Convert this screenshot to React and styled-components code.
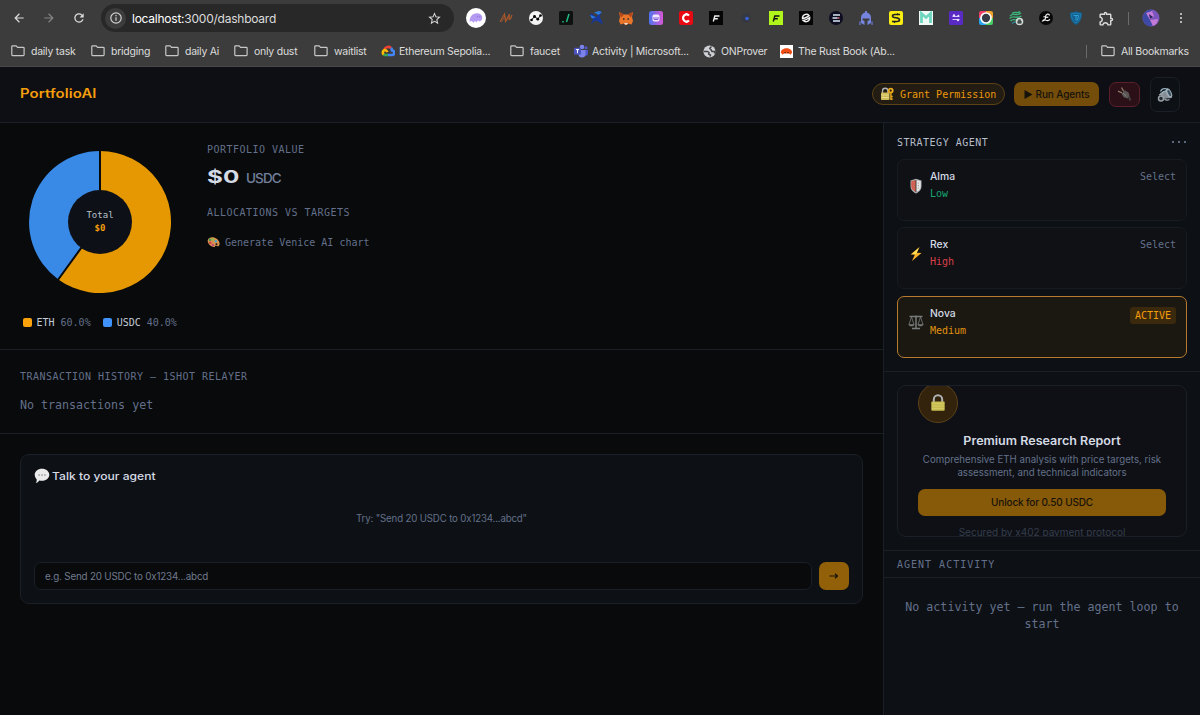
import styled, { createGlobalStyle } from "styled-components";
import { MdArrowBack, MdArrowForward, MdRefresh, MdStarBorder, MdOutlineExtension } from "react-icons/md";

const COLORS = {
  bg: "#080a0c",
  panel: "#0d1015",
  header: "#0d0f14",
  line: "#1b1f27",
  amber: "#f59e0b",
  dim: "#64708a",
  text: "#d5dbe5",
};

const extensions = [
  <g key="a">
    <circle cx="15" cy="15" r="10" fill="#fff" />
    <path d="M8.500 18.500c.5-5.500 3-8 7-8.300 3.500-.2 5.500 1.600 5.800 4 .2 2-1 4-3 4.300l-1.300-1.200-1.200 2-1.800-1.200-1.600 1.700-1.400-1.700z" fill="#b49af2" />
    <path d="M16.500 12.800v1.600M18.800 12.800v1.600" stroke="#8f72dc" />
  </g>,
  <g key="b" fill="none" stroke="#a8572d" strokeWidth="1.100">
    <path d="M9 19l4.500-8 1 7.500 4-7.500-.5 5.500q2-.5 3-4.500" />
    <path d="M10.500 19l3.500-6 .5 6 3.500-6" strokeWidth=".7" />
  </g>,
  <g key="c">
    <circle cx="15" cy="15" r="7" fill="#f4f4f4" />
    <path d="M10.500 17l3-3.500 3.300 2.500 2.700-3.500" stroke="#111" strokeWidth="1" fill="none" />
    <circle cx="10.500" cy="17" r="1.300" />
    <circle cx="13.500" cy="13.500" r="1.400" />
    <circle cx="16.800" cy="16.200" r="1.400" />
    <circle cx="19.500" cy="12.500" r="1.300" />
  </g>,
  <g key="d">
    <rect x="8" y="8" width="14" height="14" rx="1.500" fill="#0d1110" />
    <path d="M18 11l-2.500 8M12 18v1.500" stroke="#22b980" strokeWidth="1.500" />
  </g>,
  <g key="e">
    <path d="M8.500 11c4-1 5 3 7 3l4.500-6-1 6 3 7c-4-1-5-3-7.500-3.500L10 21l2-4.500z" fill="#17399c" />
    <path d="M13 9.500l5-1.500 3 1-3.500 3zM9 12l6 2-4 1.500z" fill="#2b7be0" />
  </g>,
  <g key="f">
    <path d="M8 9l5 2.500h4L22 9l-1 5 1 4-1.500 3.500-3.500-1-1 1.500h-2l-1-1.500-3.500 1L8 18l1-4z" fill="#e8752a" />
    <path d="M8 9l5 2.500-3 3zM22 9l-5 2.500 3 3z" fill="#b4441a" />
    <path d="M12 16h1.500M16.500 16H18" stroke="#2a2a2a" strokeWidth="1.300" />
    <path d="M13 20h4l-1 1.500h-2z" fill="#e9dccf" />
  </g>,
  <g key="g">
    <defs>
      <linearGradient id="violetMix" x1="0" y1="0" x2="1" y2="0">
        <stop offset="0" stopColor="#4c74ee" />
        <stop offset="1" stopColor="#d957d8" />
      </linearGradient>
    </defs>
    <rect x="8" y="8" width="14" height="14" rx="2.500" fill="url(#violetMix)" />
    <rect x="11.500" y="11.500" width="7" height="7" rx="1.800" fill="#eee7ff" />
    <path d="M13 14v2.500h4V14M15 14v2.500" stroke="#7a4bc8" strokeWidth=".9" fill="none" />
  </g>,
  <g key="h">
    <rect x="8" y="8" width="14" height="14" rx="2" fill="#e80a12" />
    <path d="M18 12.500a3.500 3.500 0 100 5M15.500 10v2M15.500 18v2" fill="none" stroke="#fff" strokeWidth="2.200" />
  </g>,
  <g key="i">
    <rect x="8" y="8" width="14" height="14" fill="#050505" />
    <path d="M12.300 18.500l1.500-5.500h4.700M13.200 15.800h3.600" fill="none" stroke="#eee" strokeWidth="1.400" />
  </g>,
  <g key="j">
    <circle cx="15" cy="15" r="4.500" fill="#343842" />
    <circle cx="16" cy="15.500" r="1.800" fill="#3c60dc" />
  </g>,
  <g key="k">
    <rect x="8" y="8" width="14" height="14" fill="#b0f51c" />
    <path d="M12.300 18.500l1.500-5.500h4.700M13.200 15.800h3.600" fill="none" stroke="#111" strokeWidth="1.400" />
  </g>,
  <g key="l">
    <rect x="8" y="8" width="14" height="14" fill="#050505" />
    <path d="M11.500 15.500a3.800 3.800 0 016.500-3q-1.500 2-6.500 3zM18.700 14.500a3.800 3.800 0 01-6.500 3q3-.5 6.500-3z" fill="none" stroke="#eee" strokeWidth="1.400" />
  </g>,
  <g key="m">
    <circle cx="15" cy="15" r="7" fill="#0c0d20" />
    <path d="M12 12h7M11.500 15h5M12 18h7" stroke="#d9e6ef" strokeWidth="1.500" />
    <path d="M16.500 15h2" stroke="#e26c6c" strokeWidth="1.500" />
  </g>,
  <g key="n">
    <path d="M10 20v-5.500a5 5 0 0110 0V20l-3.500 2v-4l2-1v-1.500h-7V17l2 1v4z" fill="#7584dc" />
    <path d="M15 8v3" stroke="#7584dc" strokeWidth="1.800" />
    <path d="M9 18.500v3.500M21 18.500v3.500" stroke="#6675cc" strokeWidth="1.300" />
  </g>,
  <g key="o">
    <rect x="8" y="8" width="14" height="14" rx="2" fill="#f8ec12" />
    <path d="M19 11.500h-5q-2.500 0-2.500 1.500t3.500 1.800q3.500.3 3.500 2t-2.500 1.700h-5M17 10.500l-1.500 1.500M14.500 18l-1.500 1.800" fill="none" stroke="#222" strokeWidth="1.600" />
  </g>,
  <g key="p">
    <rect x="8" y="8" width="14" height="14" fill="#effaf6" />
    <path d="M10.500 20v-9.500l4.500 4 4.500-4V20" fill="none" stroke="#6ed5bf" strokeWidth="2.800" />
  </g>,
  <g key="q">
    <rect x="8" y="8" width="14" height="14" rx="1.500" fill="#5a2bc4" />
    <path d="M11.500 13.500h7M18.500 16.500h-7" fill="none" stroke="#d8c9ff" strokeWidth="1" />
    <circle cx="13" cy="12.500" r="1.200" fill="#e8ddff" />
    <circle cx="17.300" cy="12.800" r="1" fill="#e8ddff" />
    <circle cx="17" cy="17" r="1.200" fill="#e8ddff" />
  </g>,
  <g key="r">
    <path d="M10 8h5v7H8v-5a2 2 0 012-2z" fill="#ee3f65" />
    <path d="M15 8h5a2 2 0 012 2v5h-7z" fill="#f3a12a" />
    <path d="M8 15h7v7h-5a2 2 0 01-2-2z" fill="#25a5ec" />
    <path d="M15 15h7v5a2 2 0 01-2 2h-5z" fill="#47cf64" />
    <circle cx="15" cy="15" r="5" fill="#363b46" stroke="#fff" strokeWidth="1.700" />
  </g>,
  <g key="s">
    <g fill="none" stroke="#39b77a" strokeWidth="1.300">
      <path d="M9 13c4-4 7 1 11-3M8.500 15.500c4-4 7 1 12-2.500M9.500 18c3-3 5 0 7.500-1.500M11 10.500c3-2.500 6 .5 8-2" />
      <path d="M11 20.500q2-2 4-1" stroke="#2a8a9a" />
    </g>
    <circle cx="18.500" cy="18.500" r="3.800" fill="#d5dbd8" />
    <path d="M16.800 18h3.400v2.300h-3.400zM17.500 18v-1.200h2V18" fill="#45504b" stroke="#45504b" strokeWidth=".7" />
  </g>,
  <g key="t">
    <circle cx="15" cy="15" r="7" fill="#070707" />
    <path d="M18.500 12.500q-.5-1.800-2.300-1.300-1.700.6-1.500 2.300l-2.200.3M14.700 13.500q-.2 4-3 4.500 1-2 3.300-.8 2.300 1 4-.9M14.800 14.500l2.500-.3" fill="none" stroke="#f3f3f3" strokeWidth="1.200" />
  </g>,
  <g key="u">
    <path d="M9 9.500c4 0 4-1 6-1s2 1 6 1c0 6-1.500 10-6 12.500-4.500-2.500-6-6.500-6-12.500z" fill="#14608f" />
    <path d="M10.500 11q4.500-1.500 9 0c0 4-1 7-4.500 9-3.500-2-4.500-5-4.500-9z" fill="none" stroke="#2484b8" strokeWidth=".8" />
    <path d="M12.500 12.500h5M15 12.500v5M17.500 12.500q0 3-1.500 5" fill="none" stroke="#2da0d6" strokeWidth="1" />
  </g>,
];

const allocations = [
  { name: "ETH", share: "60.0%", color: "#f9a20b" },
  { name: "USDC", share: "40.0%", color: "#3f93fa" },
];

const ShieldIcon = () => (
  <svg width="14" height="16" viewBox="0 0 14 16">
    <path d="M1.500 2.500L7 .8l5.500 1.700v5.500c0 4-2.500 6-5.500 7.500-3-1.500-5.500-3.500-5.500-7.500z" fill="#a5a9ac" />
    <path d="M2.300 3.300L7 2v12c-3-1.500-4.700-3-4.700-6z" fill="#d95b4b" />
    <path d="M7 2l4.700 1.300V8c0 3-1.700 4.700-4.700 6z" fill="#e6e7e7" />
    <path d="M7 2v12" stroke="#444" />
    <path d="M4.800 4.500v6M9.300 4.500v6" stroke="#9a8b86" strokeDasharray="1 1.500" />
  </svg>
);

const BoltIcon = () => (
  <svg width="14" height="16" viewBox="0 0 14 16">
    <path d="M10.500 1L1.500 8.500l4.300.2L3 15l9.500-8-4.600-.3z" fill="#fbb32a" />
    <path d="M10 1.500L3 8l4 .1z" fill="#ffe15a" />
  </svg>
);

const ScalesIcon = () => (
  <svg width="16" height="16" viewBox="0 0 16 16" fill="none" stroke="#777b7c">
    <path d="M8 1.500V14M1.500 2.500h13M4 14.500h8" strokeWidth="1.500" />
    <path d="M3.500 3L1 10.500M3.500 3L6 10.500M12.500 3L10 10.500M12.500 3L15 10.500" strokeWidth=".8" />
    <path d="M.8 10.500h5.400a2.700 1.500 0 01-5.400 0zM9.800 10.500h5.400a2.700 1.500 0 01-5.400 0z" fill="#777b7c" strokeWidth=".6" />
  </svg>
);

const agents = [
  { name: "Alma", risk: "Low", color: "#17a672", icon: <ShieldIcon /> },
  { name: "Rex", risk: "High", color: "#dc4048", icon: <BoltIcon /> },
  { name: "Nova", risk: "Medium", color: "#e0920f", icon: <ScalesIcon />, active: true },
];

const GoogleCloudIcon = () => (
  <svg width="14" height="12" viewBox="0 0 14 12" fill="none" strokeWidth="2.600">
    <path d="M3.500 4.500A4 4 0 0110 3" stroke="#ea4335" />
    <path d="M10 3a3.500 3.500 0 011 2.500 2.200 2.200 0 010 4.500H7" stroke="#4285f4" />
    <path d="M7 10H4a2.500 2.500 0 01-1.300-.5" stroke="#34a853" />
    <path d="M2.700 9.500A2.700 2.700 0 013.500 5Q5.500 5 6.500 7" stroke="#fbbc05" />
  </svg>
);

const TeamsIcon = () => (
  <svg width="14" height="14" viewBox="0 0 14 14">
    <circle cx="8" cy="3" r="2.300" fill="#7b83eb" />
    <circle cx="12" cy="3.800" r="1.500" fill="#5059c9" />
    <path d="M10.500 6H14v3.500a2.300 2.300 0 01-3.500 2z" fill="#5059c9" />
    <path d="M4.500 6h7v4a3.500 3.500 0 01-7 0z" fill="#7b83eb" />
    <rect x="0" y="3.800" width="7" height="7" rx=".8" fill="#4b53bc" />
    <path d="M2 5.600h3M3.500 5.600v3.600" stroke="#fff" />
  </svg>
);

const GlobeIcon = () => (
  <svg width="13" height="13" viewBox="0 0 13 13">
    <circle cx="6.500" cy="6.500" r="6" fill="#cfd1d4" />
    <path d="M8.500 1.500L6.800 3.300 8 4.800l1 1.700h3l-.5 2M1 6.500h3.500l1.500 1-.3 1.500 1.800 1-.5 1.500" fill="none" stroke="#42454a" strokeWidth="1.500" />
  </svg>
);

const RustBookIcon = () => (
  <svg width="13" height="13" viewBox="0 0 13 13">
    <rect width="13" height="13" fill="#fff" />
    <path d="M.8 7.500C1 5 3.500 3.200 6.500 3.200S12 5 12.200 7.500L10.500 9.800 9 8.600H4L2.500 9.800z" fill="#f04c14" />
    <path d="M5 7v1.200M8 7v1.200" stroke="#222" />
  </svg>
);

const FolderIcon = () => (
  <svg width="14" height="12" viewBox="0 0 14 12" fill="none" stroke="#c7c7c7" strokeWidth="1.200">
    <path d="M.8 9.800V1.500q0-.7.700-.7h3.600l1.500 1.500h5.700q.8 0 .8.800v6.700q0 .8-.8.800H1.600q-.8 0-.8-.8z" />
  </svg>
);

const bookmarks = [
  { label: "daily task", width: 80 },
  { label: "bridging", width: 74 },
  { label: "daily Ai", width: 69 },
  { label: "only dust", width: 80 },
  { label: "waitlist", width: 67 },
  { label: "Ethereum Sepolia...", width: 129, icon: <GoogleCloudIcon />, gap: 4 },
  { label: "faucet", width: 64 },
  { label: "Activity | Microsoft...", width: 129, icon: <TeamsIcon />, gap: 4 },
  { label: "ONProver", width: 77, icon: <GlobeIcon />, gap: 5 },
  { label: "The Rust Book (Ab...", width: 140, icon: <RustBookIcon />, gap: 5 },
];

const LockKeyIcon = () => (
  <svg width="14" height="14" viewBox="0 0 14 14">
    <path d="M2.500 6V4a2.700 2.700 0 015.400 0v2" fill="none" stroke="#aeb3b5" strokeWidth="1.400" />
    <rect x="1" y="5.500" width="8.500" height="7.500" rx=".8" fill="#cdbb58" />
    <path d="M1.500 8h7.500M1.500 10.500h7.500" stroke="#efe597" strokeWidth=".8" />
    <circle cx="10.700" cy="3.600" r="2" fill="none" stroke="#e9a81b" strokeWidth="1.900" />
    <path d="M10.900 6v7M10.900 9.500h1.800M10.900 12h1.800" stroke="#e9a81b" strokeWidth="1.400" />
  </svg>
);

const PlugIcon = () => (
  <svg width="16" height="16" viewBox="0 0 16 16">
    <path d="M1 5.200l4 1.600M4.500 1.500l2.200 3.800" stroke="#8c7c6a" strokeWidth="1.300" />
    <path d="M4.500 7.800L8 4.200l3.700 2.500 1 4.300-2.200 1.500-3.800-1.200z" fill="#5c5757" />
    <path d="M6 7l3.500 3.500" stroke="#837e7b" />
    <path d="M11.500 10.500l2 4" stroke="#464141" strokeWidth="1.800" />
  </svg>
);

const SpeakerIcon = () => (
  <svg width="18" height="18" viewBox="0 0 18 18">
    <path d="M4 7l4-1.500L12 3l4 9-6 .5-4 .5z" fill="#858e94" />
    <ellipse cx="13" cy="7" rx="2.600" ry="5" transform="rotate(-25 13 7)" fill="#a3b0b8" />
    <ellipse cx="13.300" cy="7" rx="1.300" ry="3.400" transform="rotate(-25 13.300 7)" fill="#3b5563" />
    <path d="M4.500 5.500Q5.500 2.500 9 2.500l3 1M6 7q1-2 4-2" fill="none" stroke="#9fbccb" strokeWidth="1.200" />
    <circle cx="5" cy="12.500" r="2.500" fill="#22282d" stroke="#949ea4" strokeWidth="1.500" />
    <path d="M3 9l3.500-1.500M8.500 13q2 2 5 .5" fill="none" stroke="#a8b1b7" strokeWidth="1.300" />
  </svg>
);

const PaletteIcon = () => (
  <svg width="13" height="12" viewBox="0 0 13 12">
    <path d="M1 3.500C2.500.5 7 .5 10 3c2.500 2 3.500 5 1.800 7-1.300 1-2.300-.5-3.300-.2-1 .4 0 1.600-1.800 1.300C3.500 10.500-.5 7 1 3.500z" fill="#d9934e" />
    <circle cx="3" cy="3.800" r="1.400" fill="#4b9c50" />
    <circle cx="6" cy="3.200" r="1.300" fill="#93b84b" />
    <circle cx="8.800" cy="5.200" r="1.200" fill="#46a6cd" />
    <circle cx="3.300" cy="6.800" r="1.300" fill="#d83d4b" />
    <circle cx="5.900" cy="9" r="1.200" fill="#c04a7d" />
    <circle cx="9.500" cy="8.200" r="1" fill="#1a1510" />
  </svg>
);

const SpeechIcon = () => (
  <svg width="16" height="16" viewBox="0 0 16 16">
    <path d="M8 .8c4.200 0 7.300 2.700 7.300 6s-3 6-7.300 6q-1.500 0-2.700-.4Q4 14.500 1.800 15q1.200-1.600.9-3.500Q.7 9.800.7 6.800C.7 3.500 3.800.8 8 .8z" fill="#ebebeb" />
    <path d="M4.500 7h1.200M7.400 7h1.200M10.300 7h1.200" stroke="#555" strokeWidth="1.200" />
  </svg>
);

const PadlockIcon = () => (
  <svg width="16" height="18" viewBox="0 0 16 18">
    <path d="M3.800 8V5.500a4.200 4.200 0 018.400 0V8" fill="none" stroke="#aeb2b4" strokeWidth="2" />
    <rect x="1.300" y="7.500" width="13.400" height="9.300" rx="1" fill="#c7bd51" />
    <path d="M2 9.500h12M2 12h12M2 14.500h12" stroke="#d6cd68" strokeWidth=".8" />
  </svg>
);

const Donut = () => (
  <Chart viewBox="0 0 144 144">
    <path d="M72 72V1A71 71 0 1130.300 129.440z" fill="#e69803" />
    <path d="M72 72L30.300 129.440A71 71 0 0172 1z" fill="#398ae6" />
    <path d="M72 0v72L29.700 130.250" fill="none" stroke="#080a0c" strokeWidth="2" />
    <circle cx="72" cy="72" r="32" fill="#0d1117" />
    <text x="72" y="68" textAnchor="middle" fill="#b9c0cb">Total</text>
    <text x="72" y="80.500" textAnchor="middle" fill="#f59e0b" fontWeight="700">$0</text>
  </Chart>
);

const App = () => {
  return (
    <>
      <GlobalStyle />
      <Window>
        <Browser>
          <Toolbar>
            <NavButtons>
              <MdArrowBack />
              <MdArrowForward color="#858585" />
              <MdRefresh />
            </NavButtons>
            <AddressBar>
              <InfoBadge>
                <svg width="14" height="14" viewBox="0 0 14 14" fill="none" stroke="#d3d3d3" strokeWidth="1.200">
                  <circle cx="7" cy="7" r="5.200" />
                  <path d="M7 6.300v3.400M7 4v1.200" />
                </svg>
              </InfoBadge>
              <Url>
                <b>localhost:</b>3000/dashboard
              </Url>
              <MdStarBorder size={15} />
            </AddressBar>
            <Extensions>
              {extensions.map((shape, i) => (
                <svg key={i} width="30" height="30" viewBox="0 0 30 30">
                  {shape}
                </svg>
              ))}
              <Puzzle>
                <MdOutlineExtension size={17} />
              </Puzzle>
            </Extensions>
            <Separator $left={7} />
            <Avatar viewBox="0 0 18 18">
              <circle cx="9" cy="9" r="8.500" fill="#7a55bd" />
              <path d="M1 7A8.500 8.500 0 0110 .6L8 9l3 7-4 1.200A8.500 8.500 0 011 7z" fill="#3c4aa6" />
              <path d="M4 4l6-2 2 5-4 4zM8 11l8-1q0 5-5 7z" fill="#c47bd8" />
              <path d="M7 5l4 3-3 2z" fill="#2a2665" />
            </Avatar>
            <Kebab>
              <i />
              <i />
              <i />
            </Kebab>
          </Toolbar>
          <BookmarkBar>
            {bookmarks.map((b) => (
              <Bookmark key={b.label} $width={b.width} $gap={b.gap}>
                {b.icon || <FolderIcon />}
                <span>{b.label}</span>
              </Bookmark>
            ))}
            <AllBookmarks>
              <Separator $left={0} />
              <Bookmark $width={88}>
                <FolderIcon />
                <span>All Bookmarks</span>
              </Bookmark>
            </AllBookmarks>
          </BookmarkBar>
        </Browser>

        <Header>
          <Brand>PortfolioAI</Brand>
          <GrantButton>
            <LockKeyIcon />
            Grant Permission
          </GrantButton>
          <RunButton>
            <svg width="9" height="9" viewBox="0 0 9 9">
              <path d="M.5 0v9l8-4.500z" fill="#15120b" />
            </svg>
            Run Agents
          </RunButton>
          <PlugButton>
            <PlugIcon />
          </PlugButton>
          <SoundButton>
            <SpeakerIcon />
          </SoundButton>
        </Header>

        <Body>
          <Main>
            <Portfolio>
              <ChartColumn>
                <Donut />
                <Legend>
                  {allocations.map((a) => (
                    <LegendItem key={a.name}>
                      <Swatch $color={a.color} />
                      {a.name}
                      <Share>{a.share}</Share>
                    </LegendItem>
                  ))}
                </Legend>
              </ChartColumn>
              <Summary>
                <Label>PORTFOLIO VALUE</Label>
                <Value>
                  <Amount>$0</Amount>
                  <Currency>USDC</Currency>
                </Value>
                <Label>ALLOCATIONS VS TARGETS</Label>
                <Generate>
                  <PaletteIcon />
                  Generate Venice AI chart
                </Generate>
              </Summary>
            </Portfolio>
            <History>
              <Label>TRANSACTION HISTORY — 1SHOT RELAYER</Label>
              <Empty>No transactions yet</Empty>
            </History>
            <Chat>
              <ChatTitle>
                <SpeechIcon />
                <ChatHeading>Talk to your agent</ChatHeading>
              </ChatTitle>
              <Hint>Try: "Send 20 USDC to 0x1234...abcd"</Hint>
              <ChatForm>
                <ChatInput placeholder="e.g. Send 20 USDC to 0x1234...abcd" />
                <SendButton>
                  <svg width="10" height="8" viewBox="0 0 10 8">
                    <path d="M.5 4h8M6 1.800L8.500 4 6 6.200" fill="none" stroke="#17120a" strokeWidth="1.200" />
                  </svg>
                </SendButton>
              </ChatForm>
            </Chat>
          </Main>

          <Sidebar>
            <Strategy>
              <SideTitle>
                STRATEGY AGENT
                <Dots>
                  <i />
                  <i />
                  <i />
                </Dots>
              </SideTitle>
              {agents.map((agent) => (
                <AgentCard key={agent.name} $active={agent.active}>
                  <AgentIcon>{agent.icon}</AgentIcon>
                  <AgentInfo>
                    <AgentName>{agent.name}</AgentName>
                    <Risk $color={agent.color}>{agent.risk}</Risk>
                  </AgentInfo>
                  {agent.active ? <Active>ACTIVE</Active> : <Select>Select</Select>}
                </AgentCard>
              ))}
            </Strategy>
            <ReportSection>
              <ReportCard>
                <LockBadge>
                  <PadlockIcon />
                </LockBadge>
                <ReportTitle>Premium Research Report</ReportTitle>
                <ReportText>
                  Comprehensive ETH analysis with price targets, risk
                  <br />
                  assessment, and technical indicators
                </ReportText>
                <Unlock>Unlock for 0.50 USDC</Unlock>
                <Secured>Secured by x402 payment protocol</Secured>
              </ReportCard>
            </ReportSection>
            <ActivityTitle>AGENT ACTIVITY</ActivityTitle>
            <NoActivity>No activity yet — run the agent loop to start</NoActivity>
          </Sidebar>
        </Body>
      </Window>
    </>
  );
};

const mono = `"DejaVu Sans Mono", "Liberation Mono", monospace`;

const GlobalStyle = createGlobalStyle`
  * {
    box-sizing: border-box;
  }
  body {
    margin: 0;
    background: ${COLORS.bg};
    color: ${COLORS.text};
    font-family: Inter, "Open Sans", sans-serif;
  }
  button, input {
    font-family: inherit;
    margin: 0;
  }
  svg {
    flex: none;
    display: block;
  }
`;

const Window = styled.div`
  width: 1200px;
  height: 715px;
  overflow: hidden;
  display: flex;
  flex-direction: column;
`;

const Browser = styled.div`
  height: 67px;
  flex: none;
  background: #3c3c3c;
  border-bottom: 1px solid #484848;
  color: #dcdcdc;
`;

const Toolbar = styled.div`
  height: 36px;
  display: flex;
  align-items: center;
`;

const NavButtons = styled.div`
  width: 101px;
  padding-left: 12px;
  display: flex;
  gap: 16px;
  font-size: 14px;
`;

const AddressBar = styled.div`
  width: 353px;
  height: 28px;
  border-radius: 14px;
  background: #282828;
  display: flex;
  align-items: center;
  padding: 0 12px 0 4px;
`;

const InfoBadge = styled.div`
  width: 21px;
  height: 21px;
  border-radius: 50%;
  background: #3c3c3c;
  display: flex;
  align-items: center;
  justify-content: center;
`;

const Url = styled.div`
  flex: 1;
  margin-left: 6px;
  font-size: 12px;
  letter-spacing: -0.24px;
  b {
    font-weight: 400;
    color: #fff;
  }
`;

const Extensions = styled.div`
  display: flex;
  margin-left: 7px;
`;

const Puzzle = styled.div`
  width: 30px;
  display: flex;
  align-items: center;
  justify-content: center;
`;

const Separator = styled.div`
  width: 1px;
  height: 13px;
  margin-left: ${(p) => p.$left}px;
  background: #6b6b6b;
`;

const Avatar = styled.svg`
  width: 18px;
  height: 18px;
  margin-left: 13px;
`;

const Kebab = styled.div`
  margin-left: 20px;
  display: flex;
  flex-direction: column;
  gap: 2px;
  i {
    width: 2px;
    height: 2px;
    background: #dcdcdc;
    border-radius: 50%;
  }
`;

const BookmarkBar = styled.div`
  height: 30px;
  display: flex;
  align-items: center;
  padding: 0 11px;
  font-size: 10.5px;
  letter-spacing: -0.25px;
`;

const Bookmark = styled.div`
  width: ${(p) => p.$width}px;
  display: flex;
  align-items: center;
  gap: ${(p) => p.$gap || 6}px;
  white-space: nowrap;
`;

const AllBookmarks = styled.div`
  margin-left: auto;
  display: flex;
  align-items: center;
  gap: 14px;
`;

const Header = styled.header`
  height: 56px;
  flex: none;
  display: flex;
  align-items: center;
  padding: 0 20px 1px;
  background: ${COLORS.header};
  border-bottom: 1px solid ${COLORS.line};
`;

/* headings use a wide, low letter shape */
const Wide = styled.div`
  transform: scaleX(${(p) => p.$stretch || 1.1});
  transform-origin: left;
  white-space: nowrap;
`;

const Brand = styled(Wide).attrs({ $stretch: 1.19 })`
  margin-right: auto;
  padding-bottom: 2px;
  color: ${COLORS.amber};
  font-size: 12.5px;
  font-weight: 600;
  letter-spacing: 0.1px;
`;

const GrantButton = styled.button`
  width: 133px;
  height: 22px;
  display: flex;
  align-items: center;
  gap: 6px;
  padding: 0 0 0 7px;
  border: 1px solid #5c4315;
  border-radius: 11px;
  background: #221c12;
  color: #ec980d;
  font-family: ${mono};
  font-size: 10px;
  white-space: nowrap;
`;

const RunButton = styled.button`
  width: 85px;
  height: 24px;
  margin-left: 9px;
  display: flex;
  align-items: center;
  justify-content: center;
  gap: 3px;
  padding: 0;
  border: 0;
  border-radius: 7px;
  background: #744d0b;
  color: #15120b;
  font-size: 10px;
  font-weight: 500;
  letter-spacing: -0.1px;
`;

const PlugButton = styled.button`
  width: 31px;
  height: 25px;
  margin-left: 10px;
  display: flex;
  align-items: center;
  justify-content: center;
  padding: 0;
  border: 1px solid #5c202b;
  border-radius: 7px;
  background: #2b1117;
`;

const SoundButton = styled.button`
  width: 30px;
  height: 35px;
  margin: 1px 0 0 10px;
  display: flex;
  align-items: center;
  justify-content: center;
  padding: 0;
  border: 1px solid ${COLORS.line};
  border-radius: 7px;
  background: #0d1015;
`;

const Body = styled.div`
  flex: 1;
  display: flex;
`;

const Main = styled.main`
  width: 883px;
`;

const Portfolio = styled.section`
  height: 227px;
  display: flex;
  border-bottom: 1px solid ${COLORS.line};
`;

const ChartColumn = styled.div`
  width: 207px;
  padding: 27px 0 0 23px;
`;

const Chart = styled.svg`
  width: 144px;
  height: 144px;
  margin-left: 5px;
  font-family: ${mono};
  font-size: 9px;
`;

const Legend = styled.div`
  display: flex;
  gap: 12.5px;
  margin-top: 22px;
`;

const LegendItem = styled.div`
  display: flex;
  align-items: center;
  height: 13px;
  font-family: ${mono};
  font-size: 10px;
  color: #c3cad5;
`;

const Swatch = styled.div`
  width: 9px;
  height: 9px;
  margin-right: 4.5px;
  border-radius: 2px;
  background: ${(p) => p.$color};
`;

const Share = styled.span`
  margin-left: 6px;
  color: ${COLORS.dim};
`;

const Summary = styled.div`
  padding-top: 20px;
`;

const Label = styled.div`
  height: 14px;
  line-height: 14px;
  font-family: ${mono};
  font-size: 10px;
  letter-spacing: 0.48px;
  color: ${COLORS.dim};
`;

const Value = styled.div`
  height: 35px;
  margin-bottom: 14px;
  display: flex;
  align-items: baseline;
`;

const Amount = styled(Wide).attrs({ $stretch: 1.35 })`
  width: 39px;
  font-size: 18px;
  line-height: 40px;
  font-weight: 700;
`;

const Currency = styled.div`
  font-size: 13.5px;
  font-weight: 500;
  letter-spacing: -0.9px;
  color: #72809a;
`;

const Generate = styled.div`
  margin-top: 15px;
  height: 14px;
  display: flex;
  align-items: center;
  gap: 5px;
  font-family: ${mono};
  font-size: 10px;
  color: ${COLORS.dim};
`;

const History = styled.section`
  height: 84px;
  padding: 20px 20px 0;
  border-bottom: 1px solid ${COLORS.line};
`;

const Empty = styled.div`
  margin-top: 12px;
  line-height: 18px;
  font-family: ${mono};
  font-size: 11.65px;
  color: ${COLORS.dim};
`;

const Chat = styled.section`
  width: 843px;
  height: 150px;
  margin: 20px 0 0 20px;
  padding: 13px;
  border: 1px solid ${COLORS.line};
  border-radius: 9px;
  background: ${COLORS.panel};
`;

const ChatTitle = styled.div`
  height: 15px;
  display: flex;
  align-items: center;
  gap: 2px;
`;

const ChatHeading = styled(Wide)`
  font-size: 11px;
  font-weight: 500;
`;

const Hint = styled.div`
  margin-top: 28px;
  line-height: 16px;
  text-align: center;
  font-size: 9.7px;
  letter-spacing: -0.16px;
  color: ${COLORS.dim};
`;

const ChatForm = styled.div`
  display: flex;
  gap: 7px;
  margin-top: 35px;
`;

const ChatInput = styled.input`
  flex: 1;
  height: 28px;
  padding: 0 10px;
  border: 1px solid ${COLORS.line};
  border-radius: 7px;
  background: ${COLORS.bg};
  font-size: 9.8px;
  letter-spacing: -0.17px;
  &::placeholder {
    color: #717b8e;
  }
`;

const SendButton = styled.button`
  width: 30px;
  height: 28px;
  display: flex;
  align-items: center;
  justify-content: center;
  padding: 0;
  border: 0;
  border-radius: 7px;
  background: #926009;
`;

const Sidebar = styled.aside`
  flex: 1;
  border-left: 1px solid ${COLORS.line};
  background: ${COLORS.panel};
`;

const Strategy = styled.section`
  height: 249px;
  padding: 12px 13px 0;
  border-bottom: 1px solid ${COLORS.line};
`;

const SideTitle = styled.div`
  height: 14px;
  margin-bottom: 10px;
  display: flex;
  align-items: center;
  justify-content: space-between;
  font-family: ${mono};
  font-size: 10px;
  letter-spacing: 0.5px;
  color: #b6bdc9;
`;

const Dots = styled.div`
  display: flex;
  gap: 3.5px;
  padding-right: 1px;
  i {
    width: 2.5px;
    height: 2.5px;
    border-radius: 50%;
    background: #7684a3;
  }
`;

const AgentCard = styled.div`
  height: 62px;
  margin-bottom: 6.3px;
  display: flex;
  padding: 9px 10px;
  border: 1px solid ${(p) => (p.$active ? "#b87b2e" : "#171b22")};
  border-radius: 7px;
  background: ${(p) => (p.$active ? "#1b1812" : "#0f1115")};
`;

const AgentIcon = styled.div`
  width: 15px;
  height: 33px;
  display: flex;
  align-items: center;
  justify-content: center;
`;

const AgentInfo = styled.div`
  flex: 1;
  margin-left: 7px;
`;

const AgentName = styled(Wide).attrs({ $stretch: 1.07 })`
  line-height: 15px;
  font-size: 9.7px;
  font-weight: 500;
`;

const Risk = styled.div`
  margin-top: 3px;
  line-height: 14px;
  font-family: ${mono};
  font-size: 10px;
  color: ${(p) => p.$color};
`;

const Select = styled.div`
  line-height: 15px;
  font-family: ${mono};
  font-size: 10px;
  color: ${COLORS.dim};
`;

const Active = styled.div`
  height: 17px;
  margin-top: 1px;
  padding: 0 5px;
  line-height: 17px;
  border-radius: 3px;
  background: #3b290e;
  font-family: ${mono};
  font-size: 10px;
  color: ${COLORS.amber};
`;

const ReportSection = styled.section`
  height: 179px;
  padding: 13px 13px 0;
  border-bottom: 1px solid ${COLORS.line};
`;

const ReportCard = styled.div`
  height: 152px;
  overflow: hidden;
  padding: 0 20px;
  border: 1px solid ${COLORS.line};
  border-radius: 9px;
  background: #0e1015;
  text-align: center;
`;

const LockBadge = styled.div`
  width: 40px;
  height: 40px;
  margin-top: -3px;
  display: flex;
  align-items: center;
  justify-content: center;
  border: 1px solid #5c421b;
  border-radius: 50%;
  background: #33230c;
`;

const ReportTitle = styled(Wide).attrs({ $stretch: 1.09 })`
  margin-top: 9px;
  line-height: 18px;
  font-size: 11.5px;
  font-weight: 600;
  transform-origin: center;
`;

const ReportText = styled.div`
  margin: 3px -10px 0;
  line-height: 13px;
  font-size: 9.7px;
  color: ${COLORS.dim};
  white-space: nowrap;
`;

const Unlock = styled.button`
  width: 248px;
  height: 27px;
  display: block;
  margin: 10px 0 9px;
  padding: 0 0 1px;
  border: 0;
  border-radius: 7px;
  background: #875a0a;
  color: #181209;
  font-size: 10px;
  font-weight: 500;
  letter-spacing: -0.15px;
`;

const Secured = styled.div`
  line-height: 14px;
  font-size: 10px;
  color: #343d4c;
`;

const ActivityTitle = styled.div`
  height: 27px;
  padding-left: 13px;
  line-height: 27px;
  border-bottom: 1px solid ${COLORS.line};
  font-family: ${mono};
  font-size: 10px;
  letter-spacing: 1px;
  color: ${COLORS.dim};
`;

const NoActivity = styled.div`
  margin: 21px 13px 0;
  text-align: center;
  line-height: 16.5px;
  font-family: ${mono};
  font-size: 11.65px;
  color: ${COLORS.dim};
`;

export default App;
